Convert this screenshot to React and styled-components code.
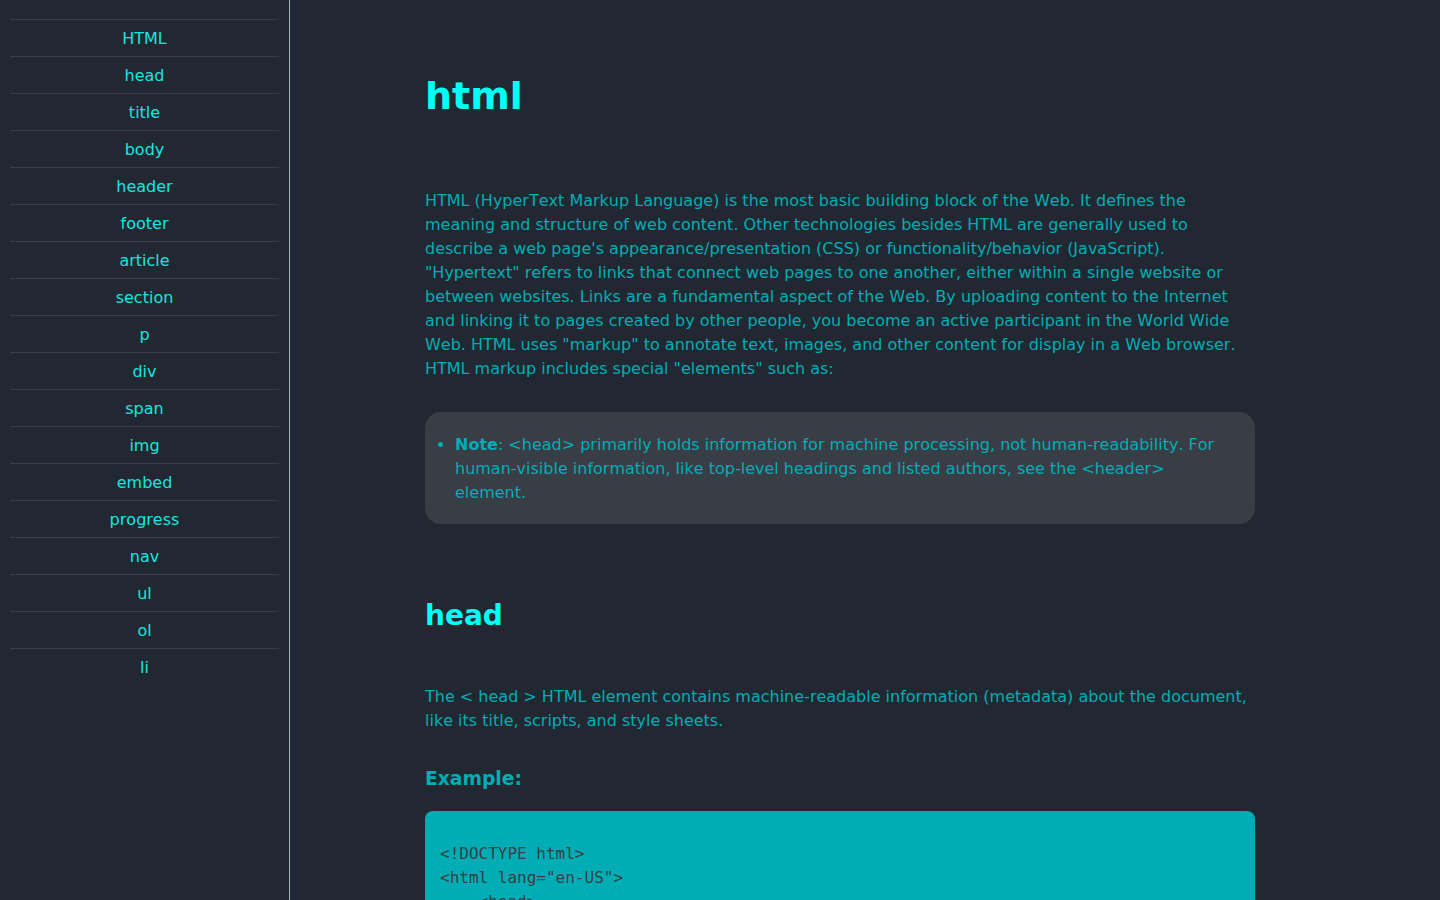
import styled, { createGlobalStyle } from "styled-components"

const dark = "#222831"
const slate = "#393e46"
const teal = "#00adb5"
const bright = "#00fff5"

const GlobalStyle = createGlobalStyle({
	"*": { boxSizing: "border-box" },
	body: {
		margin: 0,
		backgroundColor: dark,
		fontFamily: "\"DejaVu Sans\", Verdana, sans-serif",
		fontKerning: "none",
		color: teal,
	},
})

const Page = styled.div({
	display: "flex",
	alignItems: "flex-start",
	minHeight: "100vh",
})

const Sidebar = styled.nav({
	position: "sticky",
	top: 0,
	flex: "0 0 290px",
	height: "100vh",
	padding: "19px 10px 0",
	borderRight: `1px solid ${bright}`,
	overflowY: "auto",
})

const NavList = styled.ul({
	listStyle: "none",
	margin: 0,
	padding: 0,
})

const NavItem = styled.li({
	borderTop: `1px solid ${slate}`,
})

const NavLink = styled.a({
	display: "block",
	height: "36px",
	paddingTop: "2px",
	lineHeight: "34px",
	textAlign: "center",
	fontSize: "16px",
	color: "#14e6df",
	textDecoration: "none",
	":hover": {
		color: bright,
	},
})

const Main = styled.main({
	flex: 1,
	padding: "74px 0 60px 135px",
})

const Section = styled.section({
	maxWidth: "830px",
	marginBottom: "75px",
})

const Title = styled.h1({
	margin: "0 0 71px",
	fontSize: "38px",
	fontWeight: 700,
	color: bright,
})

const SubTitle = styled.h2({
	margin: "0 0 53px",
	fontSize: "28px",
	fontWeight: 700,
	color: bright,
})

const Text = styled.p({
	margin: 0,
	fontSize: "16px",
	lineHeight: "24px",
	color: teal,
})

const Note = styled.div({
	marginTop: "31px",
	padding: "21px 30px 19px",
	borderRadius: "16px",
	backgroundColor: slate,
})

const NoteList = styled.ul({
	margin: 0,
	paddingLeft: "0",
	listStylePosition: "outside",
	"li": {
		fontSize: "16px",
		lineHeight: "24px",
	},
	"strong": {
		fontWeight: 700,
	},
})

const ExampleLabel = styled.h3({
	margin: "35px 0 22px",
	fontSize: "18.72px",
	fontWeight: 700,
	color: teal,
})

const Code = styled.pre({
	margin: 0,
	padding: "31px 15px 30px",
	borderRadius: "8px",
	backgroundColor: teal,
	color: slate,
	fontFamily: "\"DejaVu Sans Mono\", \"Liberation Mono\", monospace",
	fontSize: "16px",
	lineHeight: "24px",
	overflowX: "auto",
})

const tags = ["HTML", "head", "title", "body", "header", "footer", "article", "section", "p", "div", "span", "img", "embed", "progress", "nav", "ul", "ol", "li"]

const headExample = `<!DOCTYPE html>
<html lang="en-US">
    <head>
        <meta charset="UTF-8" />
        <meta name="viewport" content="width=device-width" />
        <title>My test page</title>
    </head>
    <body>
        <p>This is my page</p>
    </body>
</html>`

export default function App() {
	return (
		<>
			<GlobalStyle />
			<Page>
				<Sidebar>
					<NavList>
						{tags.map(t => (
							<NavItem key={t}>
								<NavLink href={"#" + t.toLowerCase()}>{t}</NavLink>
							</NavItem>
						))}
					</NavList>
				</Sidebar>
				<Main>
					<Section id="html">
						<Title>html</Title>
						<Text>
							HTML (HyperText Markup Language) is the most basic building block of the Web. It defines the meaning and structure of web content. Other technologies besides HTML are generally used to describe a web page's appearance/presentation (CSS) or functionality/behavior (JavaScript). "Hypertext" refers to links that connect web pages to one another, either within a single website or between websites. Links are a fundamental aspect of the Web. By uploading content to the Internet and linking it to pages created by other people, you become an active participant in the World Wide Web. HTML uses "markup" to annotate text, images, and other content for display in a Web browser. HTML markup includes special "elements" such as:
						</Text>
						<Note>
							<NoteList>
								<li><strong>Note</strong>: &lt;head&gt; primarily holds information for machine processing, not human-readability. For human-visible information, like top-level headings and listed authors, see the &lt;header&gt; element.</li>
							</NoteList>
						</Note>
					</Section>
					<Section id="head">
						<SubTitle>head</SubTitle>
						<Text>
							The &lt; head &gt; HTML element contains machine-readable information (metadata) about the document, like its title, scripts, and style sheets.
						</Text>
						<ExampleLabel>Example:</ExampleLabel>
						<Code>{headExample}</Code>
					</Section>
				</Main>
			</Page>
		</>
	)
}
